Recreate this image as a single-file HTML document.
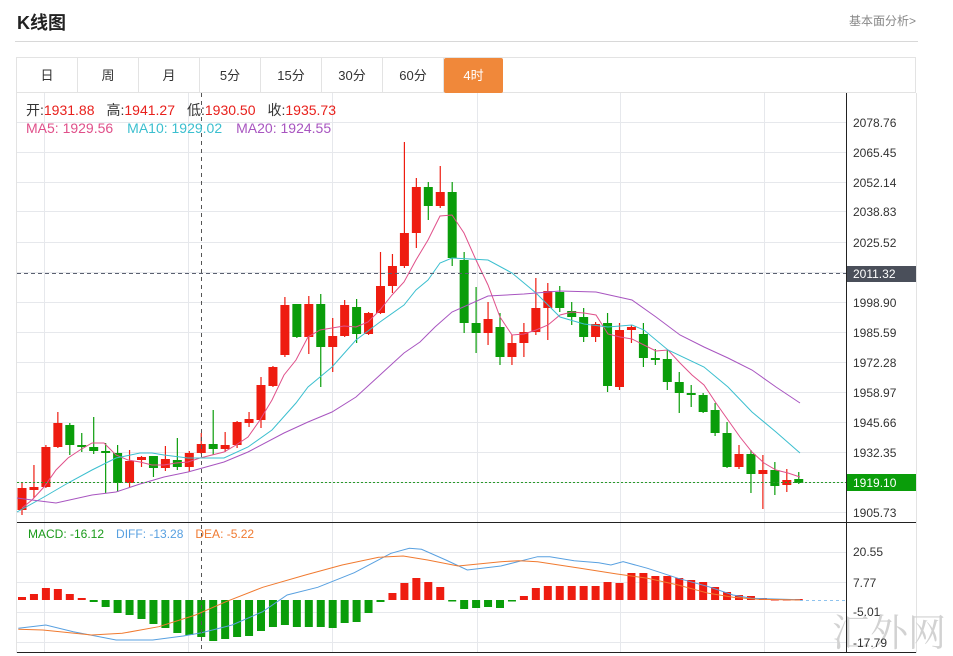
<!DOCTYPE html>
<html><head><meta charset="utf-8">
<style>
html,body{margin:0;padding:0;background:#fff;width:953px;height:656px;overflow:hidden;font-family:"Liberation Sans","Noto Sans CJK SC",sans-serif;}
.title{position:absolute;left:17px;top:9px;font-size:18px;font-weight:bold;color:#222;}
.link{position:absolute;right:37px;top:12px;font-size:12px;color:#888;}
.hr{position:absolute;left:15px;top:41px;width:903px;height:1px;background:#d8d8d8;}
.tabs{position:absolute;left:16px;top:57px;width:900px;height:36px;border:1px solid #e3e3e3;box-sizing:border-box;}
.tab{position:absolute;top:0;height:35px;line-height:35px;text-align:center;font-size:13px;color:#333;border-right:1px solid #e3e3e3;width:60px;}
.tab.on{background:#f0883a;color:#fff;border-radius:2px;border-right:none;}
svg{position:absolute;left:0;top:0;}
</style></head><body>
<div class="title">K线图</div>
<div class="link">基本面分析&gt;</div>
<div class="hr"></div>
<div class="tabs">
<div class="tab" style="left:0">日</div>
<div class="tab" style="left:61px">周</div>
<div class="tab" style="left:122px">月</div>
<div class="tab" style="left:183px">5分</div>
<div class="tab" style="left:244px">15分</div>
<div class="tab" style="left:305px">30分</div>
<div class="tab" style="left:366px">60分</div>
<div class="tab on" style="left:427px;width:59px">4时</div>
</div>
<svg id="s" width="953" height="656" xmlns="http://www.w3.org/2000/svg" font-family="Liberation Sans, Noto Sans CJK SC, sans-serif">
<g id="grid" stroke="#e6e8ec" stroke-width="1"></g>
<line x1="16.5" y1="93" x2="16.5" y2="653" stroke="#e3e3e3"/>
<line x1="916.5" y1="93" x2="916.5" y2="653" stroke="#e3e3e3"/>
<text x="832" y="646" font-size="38" fill="#d2d2d2" font-family="Noto Serif CJK SC, serif">汇外网</text>
<g id="cand"></g>
<g id="lines" fill="none" stroke-width="1"></g>
<line x1="201.5" y1="93" x2="201.5" y2="653" stroke="#555" stroke-dasharray="4,4"/>
<line x1="17" y1="273.5" x2="847" y2="273.5" stroke="#5a6070" stroke-dasharray="4,3"/>
<line x1="17" y1="482.5" x2="847" y2="482.5" stroke="#2a9a2a" stroke-dasharray="2,2"/>
<line x1="800" y1="600.5" x2="847" y2="600.5" stroke="#8fc3ee" stroke-dasharray="3,3"/>
<line x1="846.5" y1="93" x2="846.5" y2="653" stroke="#222"/>
<line x1="17" y1="522.5" x2="916" y2="522.5" stroke="#222"/>
<line x1="17" y1="652.5" x2="916" y2="652.5" stroke="#222"/>
<g font-size="12" fill="#333" id="lbl">
<text x="853" y="127">2078.76</text>
<text x="853" y="157">2065.45</text>
<text x="853" y="187">2052.14</text>
<text x="853" y="216">2038.83</text>
<text x="853" y="247">2025.52</text>
<text x="853" y="307">1998.90</text>
<text x="853" y="337">1985.59</text>
<text x="853" y="367">1972.28</text>
<text x="853" y="397">1958.97</text>
<text x="853" y="427">1945.66</text>
<text x="853" y="457">1932.35</text>
<text x="853" y="517">1905.73</text>
<text x="853" y="556">20.55</text>
<text x="853" y="587">7.77</text>
<text x="853" y="616">-5.01</text>
<text x="853" y="647">-17.79</text>
</g>
<rect x="847" y="266" width="69" height="16" fill="#4a4f5a"/>
<text x="853" y="278" font-size="12" fill="#fff">2011.32</text>
<rect x="847" y="474" width="69" height="17" fill="#0a9d0a"/>
<text x="853" y="487" font-size="12" fill="#fff">1919.10</text>
<g font-size="14">
<text x="26" y="115"><tspan fill="#333">开:</tspan><tspan fill="#e8201c">1931.88</tspan><tspan fill="#333" dx="12">高:</tspan><tspan fill="#e8201c">1941.27</tspan><tspan fill="#333" dx="12">低:</tspan><tspan fill="#e8201c">1930.50</tspan><tspan fill="#333" dx="12">收:</tspan><tspan fill="#e8201c">1935.73</tspan></text>
<text x="26" y="133"><tspan fill="#e0508a">MA5: 1929.56</tspan><tspan fill="#3bbfcf" dx="14">MA10: 1929.02</tspan><tspan fill="#a855c0" dx="14">MA20: 1924.55</tspan></text>
<text x="28" y="538" font-size="12"><tspan fill="#1a9a1a">MACD: -16.12</tspan><tspan fill="#58a0e0" dx="12">DIFF: -13.28</tspan><tspan fill="#f07a30" dx="12">DEA: -5.22</tspan></text>
</g>
</svg>
<script>
var NS="http://www.w3.org/2000/svg";
function el(p,t,a){var e=document.createElementNS(NS,t);for(var k in a)e.setAttribute(k,a[k]);document.getElementById(p).appendChild(e);return e;}
[122,152,182,211,242,272,302,332,362,392,422,452,482,512,552,582,612,642].forEach(function(y){el("grid","line",{x1:17,x2:847,y1:y+.5,y2:y+.5});});
[44,188,332,477,620,764].forEach(function(x){el("grid","line",{x1:x+.5,x2:x+.5,y1:93,y2:653});});
var C=[[488,510,483,515,1],[487,490,465,498,1],[447,487,445,488,1],[423,447,412,448,1],[425,445,423,455,0],[445,447,433,452,0],[447,451,417,454,0],[451,453,443,493,0],[453,483,445,492,0],[461,483,450,487,1],[457,460,456,467,1],[456,468,456,477,0],[459,468,446,471,1],[460,467,438,470,0],[453,467,451,472,1],[444,453,433,454,1],[444,449,410,455,0],[445,449,432,452,1],[422,445,421,448,1],[419,423,412,427,1],[385,420,377,428,1],[367,386,366,387,1],[305,355,297,357,1],[304,337,304,338,0],[304,337,296,354,1],[304,347,294,387,0],[336,347,318,372,1],[305,336,300,337,1],[307,334,299,343,0],[313,334,312,335,1],[286,313,252,314,1],[266,286,254,293,1],[233,266,142,268,1],[187,233,178,248,1],[187,206,182,220,0],[192,206,166,208,1],[192,258,182,266,0],[260,323,252,333,0],[323,333,287,353,0],[319,333,302,345,1],[327,357,313,365,0],[343,357,335,365,1],[332,343,323,357,1],[308,332,278,335,1],[291,308,283,340,1],[292,308,286,312,0],[311,317,302,325,0],[317,337,308,342,0],[324,337,322,342,1],[323,386,313,392,0],[330,387,323,390,1],[327,330,325,343,1],[334,358,323,367,0],[358,360,349,365,0],[359,382,350,390,0],[382,393,372,413,0],[393,395,385,407,0],[395,412,393,413,0],[410,433,403,436,0],[433,467,422,468,0],[454,467,445,469,1],[454,474,450,493,0],[470,474,455,509,1],[470,486,462,495,0],[480,485,469,492,1],[479,483,472,484,0]];
C.forEach(function(c,i){var x=22+i*11.95;var col=c[4]?"#ee1c10":"#0a9d0a";
el("cand","line",{x1:x,x2:x,y1:c[2],y2:c[3],stroke:col,"stroke-width":1.2});
el("cand","rect",{x:x-4.5,y:c[0],width:9,height:Math.max(2,c[1]-c[0]),fill:col});});
var M=[597,594,588,589,594,598,602,607,613,615,619,624,628,633,635,637,641,639,637,636,631,627,625,627,627,627,628,623,622,613,602,593,583,578,582,587,601,609,608,607,608,601,596,588,586,586,586,586,586,582,583,573,573,576,576,578,580,582,587,592,595,596,598,599,599,599];
M.forEach(function(y,i){var x=22+i*11.95;var up=y<600;el("cand","rect",{x:x-4,y:Math.min(y,600),width:8,height:Math.max(1.5,Math.abs(600-y)),fill:up?"#ee1c10":"#0a9d0a"});});
function pl(pts,c){el("lines","polyline",{points:pts.map(function(p){return p.join(",")}).join(" "),stroke:c});}
pl([[22,508],[32,500],[44,487],[56,470],[68,458],[80,450],[92,443],[104,443],[116,455],[128,460],[140,462],[152,465],[164,465],[176,463],[188,462],[200,458],[212,455],[224,452],[236,445],[248,437],[260,420],[272,400],[284,375],[296,360],[308,337],[320,330],[332,328],[344,326],[356,327],[368,322],[380,310],[392,295],[404,282],[416,260],[428,240],[440,216],[452,215],[464,233],[476,260],[488,285],[500,317],[512,335],[524,334],[536,330],[548,325],[560,315],[572,312],[584,313],[596,315],[608,334],[620,337],[632,339],[644,345],[656,351],[668,350],[680,363],[692,375],[704,385],[716,403],[728,420],[740,437],[752,452],[764,463],[776,470],[788,473],[800,477]],"#e0508a");
pl([[17,512],[44,497],[68,483],[92,470],[116,458],[140,453],[152,453],[164,455],[188,458],[224,458],[248,447],[272,430],[296,403],[308,387],[332,367],[356,340],[380,322],[404,305],[416,290],[428,280],[440,263],[452,258],[488,260],[512,273],[536,293],[560,317],[584,324],[608,327],[632,325],[644,330],[668,350],[704,367],[728,387],[752,412],[776,432],[800,453]],"#3bbfcf");
pl([[17,498],[32,500],[56,503],[92,495],[116,492],[140,484],[164,477],[188,472],[224,462],[248,452],[284,433],[308,422],[332,412],[356,397],[380,375],[404,353],[420,342],[435,327],[452,312],[488,296],[524,294],[560,291],[596,292],[632,300],[656,317],[680,335],[704,347],[728,358],[752,370],[776,387],[800,403]],"#a855c0");
var s=1.637;
function mp(a){return a.map(function(p){return [ (p[0]/s).toFixed(1), (500+p[1]/3).toFixed(1)];});}
pl(mp([[30,385],[75,375],[120,395],[190,420],[250,420],[300,408],[330,398],[380,375],[430,335],[470,285],[520,262],[580,218],[640,160],[670,145],[690,148],[730,180],[765,210],[820,198],[880,170],[900,170],[940,182],[980,188],[1000,195],[1020,185],[1060,205],[1110,235],[1160,260],[1200,285],[1230,295],[1310,299]]),"#58a0e0");
pl(mp([[30,388],[70,390],[150,405],[200,400],[260,380],[320,345],[370,305],[430,262],[500,225],[560,195],[620,172],[660,168],[700,180],[750,198],[820,185],[850,182],[880,185],[950,205],[1010,222],[1060,235],[1110,255],[1160,280],[1200,292],[1240,298],[1310,300]]),"#f07a30");
</script>
</body></html>
